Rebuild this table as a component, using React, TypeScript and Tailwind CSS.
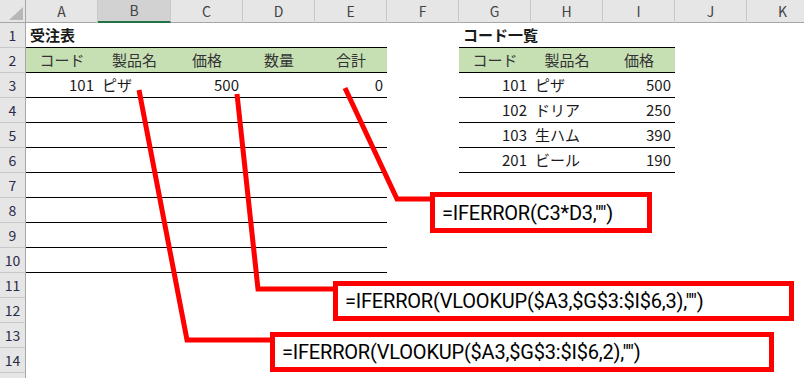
import React from 'react'

type Cell = { text: string; align?: 'left' | 'right' | 'center'; bold?: boolean }

const COLS = ['A', 'B', 'C', 'D', 'E', 'F', 'G', 'H', 'I', 'J', 'K']
const ROWS = Array.from({ length: 15 }, (_, i) => i + 1)

const CELLS: Record<string, Cell> = {
  A1: { text: '受注表', bold: true },
  A2: { text: 'コード', align: 'center' },
  B2: { text: '製品名', align: 'center' },
  C2: { text: '価格', align: 'center' },
  D2: { text: '数量', align: 'center' },
  E2: { text: '合計', align: 'center' },
  A3: { text: '101', align: 'right' },
  B3: { text: 'ピザ' },
  C3: { text: '500', align: 'right' },
  E3: { text: '0', align: 'right' },
  G1: { text: 'コード一覧', bold: true },
  G2: { text: 'コード', align: 'center' },
  H2: { text: '製品名', align: 'center' },
  I2: { text: '価格', align: 'center' },
  G3: { text: '101', align: 'right' },
  H3: { text: 'ピザ' },
  I3: { text: '500', align: 'right' },
  G4: { text: '102', align: 'right' },
  H4: { text: 'ドリア' },
  I4: { text: '250', align: 'right' },
  G5: { text: '103', align: 'right' },
  H5: { text: '生ハム' },
  I5: { text: '390', align: 'right' },
  G6: { text: '201', align: 'right' },
  H6: { text: 'ビール' },
  I6: { text: '190', align: 'right' },
}

// 表の範囲（下罫線・見出しの背景）
function inOrderTable(col: string, row: number) {
  return 'ABCDE'.includes(col) && row >= 1 && row <= 10
}
function inCodeTable(col: string, row: number) {
  return 'GHI'.includes(col) && row >= 1 && row <= 6
}

function SheetCell({ col, row }: { col: string; row: number }) {
  const cell = CELLS[`${col}${row}`]
  const ruled = inOrderTable(col, row) || inCodeTable(col, row)
  const header = row === 2 && ruled
  const align =
    cell?.align === 'right' ? 'justify-end pr-[4px]' : cell?.align === 'center' ? 'justify-center' : 'justify-start pl-[4px]'

  return (
    <div
      className={`flex items-center h-[25px] whitespace-nowrap text-[15px] text-[#1a1a1a] ${align} ${
        ruled ? 'border-b border-black' : ''
      } ${header ? 'bg-[#c6e0b4] text-[#333333]' : ''} ${cell?.bold ? 'font-bold' : ''}`}
    >
      {cell?.text}
    </div>
  )
}

function FormulaBox({ className, children }: { className: string; children: React.ReactNode }) {
  return (
    <div
      className={`absolute flex items-center border-[5px] border-[#ff0000] bg-white text-[20px] tracking-[-0.2px] text-black whitespace-nowrap font-['Roboto','Liberation_Sans',sans-serif] ${className}`}
    >
      {children}
    </div>
  )
}

export default function App() {
  return (
    <div className="relative w-[804px] h-[391px] overflow-hidden bg-white font-['Noto_Sans_CJK_JP','Noto_Sans',sans-serif]">
      <div className="h-[378px] overflow-hidden">
        {/* 列見出し */}
        <div className="grid grid-cols-[26px_72px_73px_repeat(9,72px)] h-[23px] bg-[#e6e6e6] border-b border-[#a6a6a6]">
          <div className="relative border-r border-[#a6a6a6]">
            <svg width="26" height="22" className="absolute inset-0">
              <polygon points="23,7 23,20 9,20" fill="#b7b7b7" />
            </svg>
          </div>
          {COLS.map((c) => (
            <div
              key={c}
              className={`flex items-center justify-center text-[14px] text-[#444444] border-r border-[#c8c8c8] ${
                c === 'B' ? 'bg-[#d2d2d2] border-b-2 border-b-[#217346]' : ''
              }`}
            >
              {c}
            </div>
          ))}
        </div>

        {/* 行（15行目は見切れるので番号なし） */}
        {ROWS.map((r) => (
          <div key={r} className="grid grid-cols-[26px_72px_73px_repeat(9,72px)] h-[25px]">
            <div className="flex items-center justify-center bg-[#e6e6e6] border-r border-b border-r-[#a6a6a6] border-b-[#c8c8c8] text-[14px] text-[#2b2b4a]">
              {r < 15 ? r : ''}
            </div>
            {COLS.map((c) => (
              <SheetCell key={c} col={c} row={r} />
            ))}
          </div>
        ))}
      </div>

      {/* 引き出し線 */}
      <svg className="absolute inset-0 pointer-events-none" width="804" height="391">
        <polyline points="345,88 397,199 432,199" fill="none" stroke="#ff0000" strokeWidth="5" />
        <polyline points="237,94 258,289 335,289" fill="none" stroke="#ff0000" strokeWidth="5" />
        <polyline points="139,90 187,340 272,340" fill="none" stroke="#ff0000" strokeWidth="5" />
      </svg>

      <FormulaBox className="left-[430px] top-[192px] w-[222px] h-[41px] pl-[7px]">=IFERROR(C3*D3,"")</FormulaBox>
      <FormulaBox className="left-[333px] top-[281px] w-[461px] h-[40px] pl-[7px]">
        =IFERROR(VLOOKUP($A3,$G$3:$I$6,3),"")
      </FormulaBox>
      <FormulaBox className="left-[270px] top-[332px] w-[504px] h-[40px] pl-[7px]">
        =IFERROR(VLOOKUP($A3,$G$3:$I$6,2),"")
      </FormulaBox>
    </div>
  )
}
